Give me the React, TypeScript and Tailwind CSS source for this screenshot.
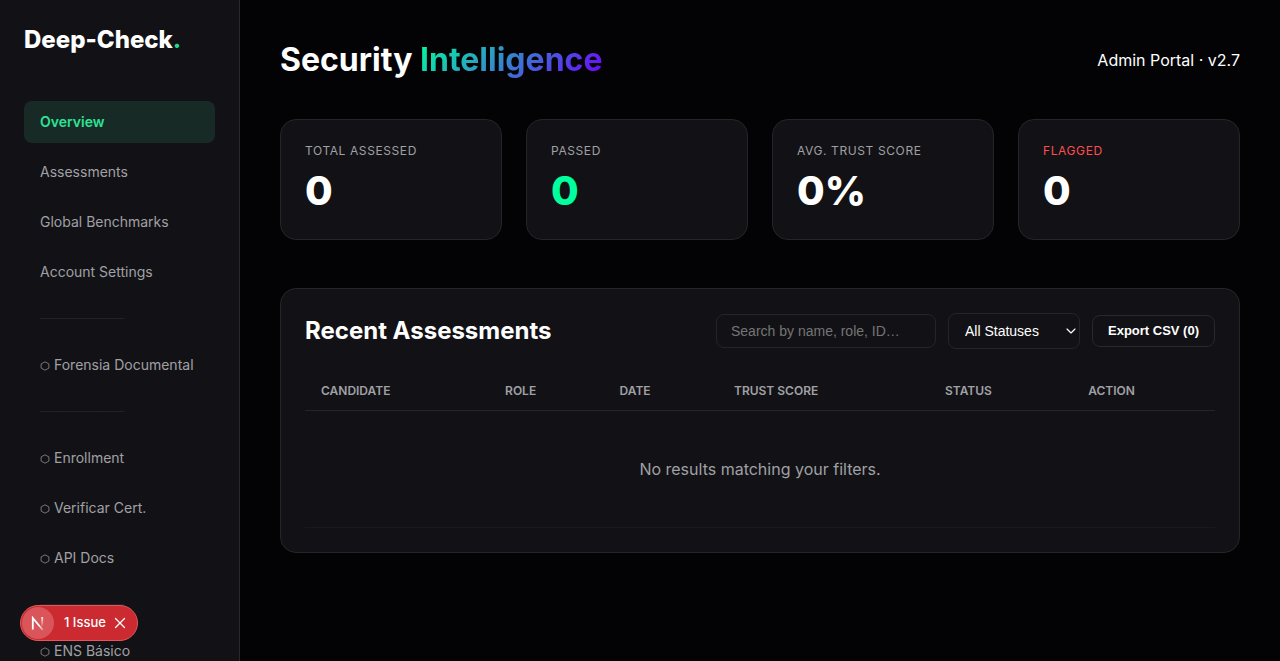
import { useState } from 'react';
import { ChevronDown, X } from 'lucide-react';
import { clsx } from 'clsx';

type NavEntry = { label: string; hex?: boolean } | 'divider';

const NAV: NavEntry[] = [
  { label: 'Overview' },
  { label: 'Assessments' },
  { label: 'Global Benchmarks' },
  { label: 'Account Settings' },
  'divider',
  { label: 'Forensia Documental', hex: true },
  'divider',
  { label: 'Enrollment', hex: true },
  { label: 'Verificar Cert.', hex: true },
  { label: 'API Docs', hex: true },
  'divider',
  { label: 'ENS Básico', hex: true },
];

const STATS = [
  { label: 'Total Assessed', value: '0' },
  { label: 'Passed', value: '0', valueClass: 'text-[#00ff9d]' },
  { label: 'Avg. Trust Score', value: '0%' },
  { label: 'Flagged', value: '0', labelClass: 'text-[#ff4d4d]' },
];

const COLUMNS = ['Candidate', 'Role', 'Date', 'Trust Score', 'Status', 'Action'];

function HexIcon() {
  return (
    <svg viewBox="0 0 10 10" className="mt-[3px] h-[10px] w-[10px] shrink-0" fill="none" stroke="currentColor" strokeWidth="0.7" aria-hidden>
      <path d="M5 0.8 8.9 2.9V7.1L5 9.2 1.1 7.1V2.9Z" />
    </svg>
  );
}

function Sidebar() {
  const [active, setActive] = useState('Overview');

  return (
    <aside className="w-60 shrink-0 overflow-hidden border-r border-[#29292c] bg-[#121216] px-6 pt-6">
      <div className="text-2xl font-extrabold">
        Deep-Check<span className="text-[#1fdc92]">.</span>
      </div>
      <nav className="mt-[45px] flex flex-col gap-2">
        {NAV.map((item, i) =>
          item === 'divider' ? (
            <div
              key={i}
              role="separator"
              className="flex h-[35px] shrink-0 items-center px-4 font-['Liberation_Mono',monospace] text-[14px] leading-5 text-[#232327]"
            >
              ──────────
            </div>
          ) : (
            <a
              key={item.label}
              href="#"
              onClick={(e) => {
                e.preventDefault();
                setActive(item.label);
              }}
              className={clsx(
                'flex h-[42px] shrink-0 items-center gap-1 rounded-lg px-4 pb-px text-[14px] whitespace-nowrap',
                active === item.label ? 'bg-[#182a26] font-semibold text-[#2de396]' : 'text-[#a0a0a5]',
              )}
            >
              {item.hex && <HexIcon />}
              {item.label}
            </a>
          ),
        )}
      </nav>
    </aside>
  );
}

function StatCard({ label, value, labelClass, valueClass }: (typeof STATS)[number]) {
  return (
    <div className="rounded-2xl border border-[#252529] bg-[#121216] p-6">
      <div className={clsx('text-[12px] leading-[14px] tracking-wider uppercase', labelClass ?? 'text-[#a0a0a5]')}>
        {label}
      </div>
      <div className={clsx('mt-[9px] text-[40px] leading-[48px] font-extrabold', valueClass)}>{value}</div>
    </div>
  );
}

function RecentAssessments() {
  const [query, setQuery] = useState('');

  return (
    <section className="mt-12 rounded-2xl border border-[#252529] bg-[#121216] p-6">
      <div className="flex items-center justify-between gap-6">
        <h2 className="text-2xl font-bold">Recent Assessments</h2>
        <div className="flex items-center gap-3 font-['Liberation_Sans',sans-serif]">
          <input
            type="search"
            aria-label="Search assessments"
            placeholder="Search by name, role, ID…"
            value={query}
            onChange={(e) => setQuery(e.target.value)}
            className="h-[34px] w-[220px] rounded-lg border border-[#252529] bg-transparent px-[14px] text-[14px] outline-none placeholder:text-[#757575]"
          />
          <div className="relative">
            <select
              aria-label="Status filter"
              className="block h-9 w-[132px] appearance-none rounded-lg border border-[#252529] bg-[#121216] px-4 text-[14px] outline-none"
            >
              <option>All Statuses</option>
              <option>Passed</option>
              <option>Flagged</option>
            </select>
            <ChevronDown className="pointer-events-none absolute top-[10px] right-px h-4 w-4" strokeWidth={1.75} aria-hidden />
          </div>
          <button type="button" className="h-8 rounded-lg border border-[#29292d] px-[15px] text-[13px] font-bold">
            Export CSV (0)
          </button>
        </div>
      </div>

      <table className="mt-[23px] w-full border-collapse">
        <thead>
          <tr className="border-b border-[#252529]">
            {COLUMNS.map((name) => (
              <th key={name} className="px-4 py-3 text-left text-[12px] leading-[14px] font-semibold text-[#a0a0a5] uppercase">
                {name}
              </th>
            ))}
          </tr>
        </thead>
        <tbody>
          <tr className="border-b border-[#1a1a1e]">
            <td colSpan={COLUMNS.length} className="py-12 text-center text-base leading-5 text-[#a0a0a5]">
              No results matching your filters.
            </td>
          </tr>
        </tbody>
      </table>
    </section>
  );
}

function IssueBadge() {
  return (
    <div className="fixed bottom-5 left-5 flex h-9 items-center rounded-full border border-[#e0575d] bg-[#ca2a30] pr-2 pl-px">
      <span className="flex h-8 w-8 items-center justify-center rounded-full bg-[#d9555a]">
        <svg viewBox="0 0 20 20" className="h-5 w-5" fill="none" strokeWidth="1.8" aria-hidden>
          <defs>
            <linearGradient id="n-diagonal" x1="4" y1="4" x2="15" y2="18" gradientUnits="userSpaceOnUse">
              <stop offset="0.6" stopColor="#fff" />
              <stop offset="1" stopColor="#fff" stopOpacity="0.2" />
            </linearGradient>
            <linearGradient id="n-stem" x1="14" y1="3" x2="14" y2="14" gradientUnits="userSpaceOnUse">
              <stop stopColor="#fff" />
              <stop offset="1" stopColor="#fff" stopOpacity="0" />
            </linearGradient>
          </defs>
          <path d="M4.8 16.5V5L14.8 17" stroke="url(#n-diagonal)" />
          <path d="M14.2 4V13.5" stroke="url(#n-stem)" />
        </svg>
      </span>
      <button type="button" className="ml-[10px] text-[13px] font-medium">
        1 Issue
      </button>
      <button type="button" aria-label="Dismiss" className="ml-[5px]">
        <X className="h-[18px] w-[18px]" strokeWidth={1.75} aria-hidden />
      </button>
    </div>
  );
}

export default function App() {
  return (
    <div className="flex h-screen overflow-hidden bg-[#030305] font-['Inter',sans-serif] text-white">
      <Sidebar />
      <main className="min-w-0 flex-1 overflow-y-auto p-10">
        <header className="flex items-center justify-between">
          <h1 className="text-[32px] leading-[39px] font-bold">
            Security{' '}
            <span className="bg-[linear-gradient(135deg,#00ff9d,#7000ff)] bg-clip-text text-transparent">
              Intelligence
            </span>
          </h1>
          <div className="text-base leading-5">Admin Portal · v2.7</div>
        </header>
        <div className="mt-10 grid grid-cols-4 gap-6">
          {STATS.map((stat) => (
            <StatCard key={stat.label} {...stat} />
          ))}
        </div>
        <RecentAssessments />
      </main>
      <IssueBadge />
    </div>
  );
}
